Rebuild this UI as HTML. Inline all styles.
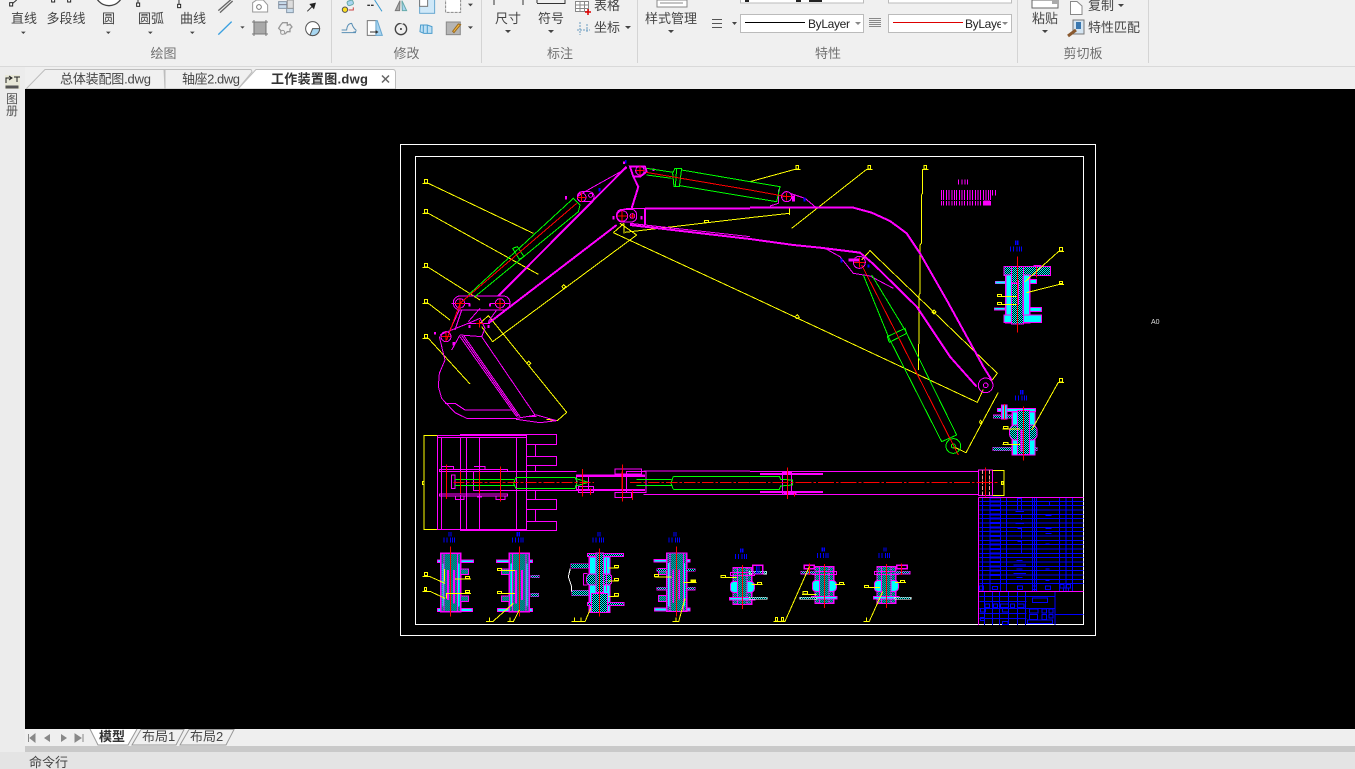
<!DOCTYPE html>
<html lang="zh"><head><meta charset="utf-8"><title>工作装置图.dwg</title>
<style>
html,body{margin:0;padding:0;width:1355px;height:769px;overflow:hidden;background:#f0f0f0}
svg{display:block;position:absolute;left:0;top:0}
text{font-family:"Liberation Sans","Noto Sans CJK SC",sans-serif;font-size:13px;fill:#454545}
.m{text-anchor:middle}
.g{fill:#707070}
.dw{shape-rendering:crispEdges;fill:none;stroke-width:3}
.dw .y{stroke:#ff0}.dw .p{stroke:#f0f}.dw .r{stroke:#f00}.dw .l{stroke:#0f0}.dw .b{stroke:#00f}.dw .w{stroke:#fff}
.p2{stroke:#f0f;stroke-width:6}
.yb{fill:none;stroke:#ff0;stroke-width:3}
</style></head><body>
<svg width="1355" height="769" viewBox="0 0 1355 769" xmlns="http://www.w3.org/2000/svg">
<defs>
<pattern id="h" patternUnits="userSpaceOnUse" width="6" height="6"><rect width="6" height="6" fill="#000"/><rect width="3" height="3" fill="#0ff"/><rect x="3" y="3" width="3" height="3" fill="#0ff"/></pattern>
<g id="lab"><rect x="-5" y="-20" width="4" height="13" fill="#00f"/><rect x="1" y="-20" width="4" height="13" fill="#00f"/><path d="M-18 -3V12M-9 -3V12M1 -3V12M8 -3V12M14 -3V12" stroke="#00f" stroke-width="3"/></g>
<g id="sec">
<rect x="-40" y="20" width="108" height="7" fill="#0ff" stroke="#f0f" stroke-width="3"/>
<rect x="-40" y="165" width="106" height="9" fill="#0ff" stroke="#f0f" stroke-width="3"/>
<rect x="-30" y="0" width="60" height="175" fill="url(#h)" stroke="#f0f" stroke-width="4"/>
<rect x="-25" y="30" width="6" height="130" fill="#0ff"/><rect x="20" y="30" width="6" height="130" fill="#0ff"/>
<rect x="-20" y="0" width="40" height="175" fill="url(#h)" stroke="#f0f" stroke-width="3"/>
<rect x="30" y="47" width="24" height="17" fill="url(#h)" stroke="#f0f" stroke-width="3"/>
<rect x="30" y="128" width="24" height="17" fill="url(#h)" stroke="#f0f" stroke-width="3"/>
<path d="M-8 50V140M10 50V150" stroke="#f0f" stroke-width="5"/>
<path d="M0 -20V190" stroke="#f00" stroke-width="3"/>
</g>
<g id="sm">
<rect x="-28" y="8" width="56" height="110" fill="url(#h)" stroke="#f0f" stroke-width="4"/>
<rect x="-36" y="50" width="72" height="32" fill="#0ff" stroke="#f0f" stroke-width="3" rx="10"/>
<rect x="-14" y="8" width="28" height="110" fill="url(#h)" stroke="#f0f" stroke-width="3"/>
<rect x="-38" y="98" width="76" height="7" fill="#0ff" stroke="#f0f" stroke-width="3"/>
<rect x="-36" y="22" width="72" height="10" fill="none" stroke="#f0f" stroke-width="3"/>
<path d="M0 0V132" stroke="#f00" stroke-width="3"/>
</g>
</defs>

<!-- toolbar -->
<rect width="1355" height="66" fill="#f0f0f0"/>
<rect y="66" width="1355" height="1" fill="#d9d9d9"/>
<rect y="67" width="1355" height="22" fill="#efefef"/>
<path d="M331.500 0V63M481.500 0V63M637.500 0V63M1017.500 0V63M1148.500 0V63" stroke="#d4d4d4" fill="none"/>

<g transform="scale(.3333)" fill="none" stroke-width="3">
<path d="M50 0L38 10" stroke="#333"/><rect x="29" y="8" width="9" height="10" fill="#fff" stroke="#222"/>
<rect x="155" y="-3" width="9" height="9" fill="#fff" stroke="#222"/><rect x="203" y="-3" width="9" height="9" fill="#fff" stroke="#222"/>
<circle cx="327" cy="-25" r="42" fill="#fff" stroke="#444" stroke-width="4"/>
<rect x="410" y="9" width="9" height="10" fill="#fff" stroke="#222"/><path d="M414 0V9" stroke="#333"/>
<rect x="533" y="13" width="9" height="10" fill="#fff" stroke="#222"/><path d="M537 0V13" stroke="#333"/>
<path d="M655 32L695 -3M660 38L698 3" stroke="#666" stroke-width="4"/>
<path d="M655 104L695 65" stroke="#3aa0e0" stroke-width="4"/>
<path d="M721 79h13l-6.500 7z" fill="#444" stroke="none"/>
<path d="M758 36V8L770 0H790L803 15V36Z" fill="#fff" stroke="#999"/><circle cx="777" cy="21" r="7" stroke="#777" fill="#fff"/>
<path d="M836 5H860V25H880V38H860V25H836Z" fill="#c9dcec" stroke="#8899aa"/><path d="M836 14H880" stroke="#778"/><rect x="862" y="0" width="18" height="25" fill="#ddd" stroke="#999"/>
<path d="M922 34L938 18" stroke="#333" stroke-width="3"/><path d="M928 12L948 8L942 28Z" fill="#222" stroke="none"/>
<rect x="762" y="66" width="36" height="36" fill="#a9a9a9" stroke="#777"/><path d="M756 66H804M756 102H804M762 60V108M798 60V108" stroke="#777"/>
<path d="M848 68h14v8l8-3 6 8-6 6v8h-8l-6 6h-12l-2-10-6-6 6-10z" fill="#f0f0f0" stroke="#999" stroke-width="4"/><circle cx="848" cy="97" r="6" stroke="#999" fill="#f0f0f0"/>
<circle cx="938" cy="86" r="21" fill="#fff" stroke="#555"/><path d="M938 86H959A21 21 0 0 1 930 105Z" fill="#a7d6f0" stroke="#555"/>
<circle cx="1035" cy="29" r="8" fill="#fde020" stroke="#555"/><rect x="1042" y="2" width="18" height="14" rx="5" fill="#a8d4f0" stroke="#6aa" transform="rotate(-20 1050 9)"/><path d="M1046 30H1060V22" stroke="#c44"/>
<path d="M1102 16H1122" stroke="#333" stroke-width="4" stroke-dasharray="8 3"/><path d="M1124 0L1146 34" stroke="#3a9ad0"/>
<path d="M1200 2L1186 32H1199Z" fill="#aaa" stroke="#777"/><path d="M1206 2L1220 32H1207Z" fill="#a8d4f0" stroke="#6aa"/>
<rect x="1259" y="-5" width="45" height="45" fill="#cfe8f8" stroke="#68a8d0"/><rect x="1259" y="-5" width="24" height="24" fill="#fff" stroke="#777"/>
<rect x="1337" y="-5" width="45" height="42" fill="#fff" stroke="#888" stroke-dasharray="9 3"/>
<path d="M1404 11h15l-7.500 8z" fill="#444" stroke="none"/>
<path d="M1025 98H1068M1025 90H1040Q1042 70 1055 70Q1060 85 1068 90Q1070 97 1060 96" stroke="#5a8fb5"/>
<path d="M1102 62H1128V106H1102Z" fill="#fff" stroke="#777"/><path d="M1128 62H1132L1147 106H1128Z" fill="#a8d4f0" stroke="#68a8d0"/><path d="M1110 96H1130M1127 92L1133 96L1127 100" stroke="#333"/>
<circle cx="1203" cy="87" r="17" stroke="#444" stroke-width="4"/><circle cx="1203" cy="87" r="3" fill="#333" stroke="none"/><path d="M1197 66L1210 70" stroke="#f0f0f0" stroke-width="4"/>
<path d="M1262 75H1282L1296 80V100H1272L1260 95Z" fill="#bfe0f5" stroke="#4a9ccc"/><path d="M1270 75V98M1282 75V100" stroke="#4a9ccc"/>
<rect x="1339" y="66" width="42" height="38" fill="#b5b5b5" stroke="#888"/><path d="M1362 98L1382 74L1375 72L1358 94Z" fill="#f4b942" stroke="#9a6a20"/>
<path d="M1404 79h15l-7.500 8z" fill="#444" stroke="none"/>
<path d="M63 95h14l-7 7zM318 95h14l-7 7zM444 95h14l-7 7zM570 95h14l-7 7z" fill="#444" stroke="none"/>
</g>

<text x="24" y="23" class="m">直线</text><text x="66" y="23" class="m">多段线</text><text x="108.500" y="23" class="m">圆</text><text x="151" y="23" class="m">圆弧</text><text x="193" y="23" class="m">曲线</text>
<text x="508" y="23" class="m">尺寸</text><text x="551" y="23" class="m">符号</text><text x="671" y="23" class="m">样式管理</text>
<text x="594" y="10">表格</text><text x="594" y="32">坐标</text>
<text x="1045" y="23" class="m">粘贴</text><text x="1088" y="10">复制</text><text x="1088" y="32">特性匹配</text>
<text x="163.500" y="58" class="m g">绘图</text><text x="406.500" y="58" class="m g">修改</text><text x="560" y="58" class="m g">标注</text><text x="828" y="58" class="m g">特性</text><text x="1083" y="58" class="m g">剪切板</text>

<path d="M494 0V5M523 0V5" stroke="#333"/><path d="M537 3.500H565V0" stroke="#333" fill="none"/><path d="M537 0V3" stroke="#333"/>
<path d="M505 30h6l-3 3zM548 30h6l-3 3zM668 30h6l-3 3zM1042 30h6l-3 3zM625 26h6l-3 3zM1118 4h6l-3 3z" fill="#444"/>
<g fill="none" stroke="#888"><rect x="575.500" y="1.500" width="13" height="10" fill="#fff"/><path d="M575 5H589M575 8.500H589M580 1V12M584.500 1V12"/></g>
<path d="M588 9V15M585 12H591" stroke="#d00" stroke-width="1.500"/>
<g stroke="#6a9cc0" fill="none" stroke-dasharray="2 1"><path d="M577 30H590M580 22V35M587 24V33"/></g>
<rect x="657" y="0" width="30" height="7" fill="#fff" stroke="#888"/><path d="M660 3H683" stroke="#888"/>
<g fill="none"><path d="M712 19.500H722M712 23.500H722M712 27.500H722" stroke="#555"/><path d="M732 22h5l-2.500 3z" fill="#444"/></g>
<path d="M869 18.500H881M869 20.500H881M869 22.500H881M869 24.500H881M869 26.500H881" stroke="#888"/>
<rect x="740.500" y="14.500" width="123" height="18" fill="#fff" stroke="#bbb"/><rect x="888.500" y="14.500" width="123" height="18" fill="#fff" stroke="#bbb"/>
<rect x="740.500" y="-5" width="123" height="8" fill="#fff" stroke="#bbb"/><rect x="888.500" y="-5" width="123" height="8" fill="#fff" stroke="#bbb"/>
<rect x="745" y="0" width="4" height="2" fill="#222"/><rect x="796" y="0" width="5" height="2" fill="#222"/><rect x="809" y="0" width="13" height="2" fill="#222"/>
<rect x="745" y="22" width="60" height="1" fill="#000"/><rect x="893" y="22" width="70" height="1" fill="#d00"/>
<text x="808" y="28" style="font-size:12px;fill:#222" textLength="42">ByLayer</text>
<svg x="965" y="14" width="36" height="19" viewBox="0 0 36 19"><text x="0" y="14" style="font-size:12px;fill:#222" textLength="42">ByLayer</text></svg>
<path d="M855 22h6l-3 3zM1002 22h6l-3 3z" fill="#888"/>
<rect x="1032" y="0" width="26" height="8" fill="#fff" stroke="#666"/><rect x="1052" y="0" width="6" height="4" fill="#aaa"/>
<path d="M1070.500 1.500H1077L1082 6V14.500H1070.500Z" fill="#fff" stroke="#888"/>
<rect x="1073" y="20" width="11" height="14" fill="#d5e5f2" stroke="#777"/><rect x="1076" y="22" width="5" height="7" fill="#3a78b0"/><path d="M1068 36L1076 30" stroke="#8a5a30" stroke-width="3"/>

<!-- tabs -->
<path d="M26 89L45 69.500H164L165 89Z" fill="#f0f0f0" stroke="#bdbdbd"/>
<path d="M165 89V69.500H251L252 72L238 89Z" fill="#f0f0f0" stroke="#bdbdbd"/>
<path d="M238 89L256 69.500H393Q395 69.500 395.500 72V89Z" fill="#fff" stroke="#bdbdbd"/>
<text x="60" y="83.500" textLength="91">总体装配图.dwg</text><text x="182" y="83.500" textLength="58">轴座2.dwg</text>
<text x="271" y="83.500" style="font-weight:bold;fill:#333" textLength="97">工作装置图.dwg</text>
<path d="M382 75.500L389 82.500M389 75.500L382 82.500" stroke="#666" stroke-width="1.500"/>

<!-- left -->
<rect x="0" y="67" width="25" height="702" fill="#ececec"/>
<rect x="5" y="75" width="15" height="14" fill="#e8e8d8"/>
<path d="M6 83V78H11M9 76L12 78L9 80M14 77H20M17 77V82" stroke="#222" fill="none"/><rect x="5.500" y="85.500" width="13" height="3" fill="#555"/>
<text x="6" y="103" style="font-size:12px;fill:#555">图</text>
<text x="6" y="115" style="font-size:12px;fill:#555">册</text>

<!-- canvas -->
<rect x="25" y="89" width="1330" height="640" fill="#000"/>
<rect x="400.500" y="144.500" width="695" height="491" fill="none" stroke="#fff"/>
<rect x="415.500" y="156.500" width="668" height="468" fill="none" stroke="#fff"/>
<text x="1151" y="324" style="font-size:7px;fill:#ddd">A0</text>

<!-- region Z3 -->
<g class="dw" transform="translate(400 140) scale(.33333)">
<g class="y">
<rect x="73" y="119" width="10" height="10"/><path d="M67 130H85L400 280"/>
<rect x="73" y="209" width="10" height="10"/><path d="M67 220H85L415 403"/>
<rect x="73" y="371" width="10" height="10"/><path d="M67 382H85L240 480"/>
<rect x="73" y="479" width="10" height="10"/><path d="M67 490H85L150 540"/>
<rect x="73" y="584" width="10" height="10"/><path d="M67 595H85L210 732"/>
<path d="M640 278L1050 468"/>
<path d="M245 560L278 605L710 285L660 250M640 278L672 250M672 250V280M675 277L1050 233"/>
<path d="M240 550L265 527L500 817L472 842L440 838"/>
<rect x="914" y="241" width="11" height="7"/>
<path d="M486 440L491 434L497 440L491 446Z"/><path d="M381 670L386 664L392 670L386 676Z"/>
</g>
<g class="p">
<path class="p2" d="M680 80L295 468"/>
<path d="M680 85L590 135L555 155M555 155L532 170"/>
<path class="p2" d="M265 550L650 255"/>
<path d="M118 590L130 640L135 660L118 700L115 740L125 775L165 818L200 835L350 835"/>
<path d="M135 790H165L195 810H335"/>
<path d="M180 590L350 830M186 588L355 830M192 588L360 830"/>
<path d="M245 590L405 825"/>
<path d="M180 585L155 630M180 585L245 590L255 565L240 535L205 550L150 572L120 585"/>
<path d="M350 835L410 825L470 842L420 848L350 838ZM380 830H410"/>
<rect x="160" y="468" width="170" height="42" rx="20"/>
<path d="M178 510L150 570M185 510L165 570M240 505L205 545M290 510L265 545"/>
<circle cx="180" cy="490" r="14"/><circle cx="300" cy="490" r="14"/>
<circle cx="138" cy="590" r="15"/>
<path d="M155 490H210M270 490H330M205 550H270"/>
<circle cx="545" cy="172" r="13"/><rect x="532" y="155" width="50" height="30" rx="14"/><circle cx="572" cy="166" r="6"/>
<path class="p2" d="M690 80H735L740 95L720 110L700 110ZM700 110L715 140L695 205"/>
<circle cx="720" cy="92" r="13"/>
<path d="M650 230Q650 205 695 205H735"/>
<path class="p2" d="M735 205H1050"/>
<path class="p2" d="M735 205V255"/>
<rect x="650" y="208" width="60" height="38" rx="16"/>
<circle cx="697" cy="228" r="7"/>
<circle cx="667" cy="228" r="16"/>
<path class="p2" d="M690 255L1050 297"/>
<path d="M690 250L1050 290"/>
</g>
<g style="stroke:none"><rect x="637" y="228" width="6" height="10" fill="#f0f"/><rect x="722" y="228" width="6" height="10" fill="#f0f"/><rect x="495" y="168" width="6" height="10" fill="#f0f"/><rect x="669" y="64" width="6" height="8" fill="#f0f"/><rect x="757" y="85" width="6" height="8" fill="#f0f"/><rect x="205" y="490" width="7" height="9" fill="#f0f"/><rect x="102" y="576" width="6" height="8" fill="#f0f"/><rect x="158" y="606" width="7" height="10" fill="#f0f"/><rect x="205" y="555" width="6" height="9" fill="#f0f"/><rect x="263" y="555" width="6" height="9" fill="#f0f"/><rect x="267" y="490" width="6" height="9" fill="#f0f"/></g>
<g style="stroke:none"><rect x="595" y="144" width="6" height="10" fill="#00f"/><rect x="675" y="60" width="5" height="10" fill="#00f"/></g>
<g class="l">
<path d="M205 465L520 175L540 195L535 215L225 470"/>
<path d="M338 325L352 320L372 350L358 358Z"/>
<path d="M740 85L820 97M740 105L815 115M845 90L1050 125M840 137L1050 172"/>
<path d="M818 100L825 85H845L838 140H822Z"/><path d="M830 85L826 140"/>
</g>
<g class="r">
<path d="M140 600L180 490L530 190"/>
<path d="M738 97L1050 150"/>
<path d="M180 475V510M165 490H195M300 475V510M285 490H315M138 575V605M125 590H152M545 158V186M532 172H558M720 78V106M708 92H734M666 212V244M652 228H682M697 220V236M690 228H705M238 540V562M228 550H250"/>
</g>
</g>

<!-- region Z4 -->
<g class="dw" transform="translate(750 140) scale(.33333)">
<g class="y">
<rect x="138" y="77" width="8" height="10"/><path d="M152 88H135L0 125"/>
<rect x="354" y="77" width="8" height="10"/><path d="M368 88H350L125 265"/>
<rect x="522" y="77" width="8" height="10"/><path d="M536 88H518V160L514 165V310L510 315V460L507 465V610L505 615V690"/>
<path d="M335 360L360 332L742 700L725 722"/>
<path d="M0 468L682 787L700 748"/>
<path d="M745 757L648 938L610 920"/>
<path d="M118 205V225M0 233L118 220"/>
<path d="M546 516L552 510L558 516L552 522Z"/><path d="M688 846L692 841L696 846L692 851Z"/><path d="M135 530L142 524L148 532L140 536Z"/>
</g>
<g class="p">
<path class="p2" d="M0 203H310"/>
<path class="p2" d="M310 203L365 218L420 243L470 280L510 340L590 480L700 680L725 720"/>
<path class="p2" d="M0 297L130 315L210 323L330 338L370 372L500 500L600 650L680 740"/>
<path d="M90 150H85V190L60 198M120 160L165 175L195 200"/>
<circle cx="707" cy="736" r="22"/><circle cx="707" cy="736" r="7"/>
<path d="M225 325L270 350L310 400L360 408L430 445"/>
<circle cx="110" cy="170" r="15"/><circle cx="328" cy="367" r="18"/>
<path d="M130 166V184M295 360H330" stroke="#f0f" stroke-width="9"/>
</g>
<g class="l">
<path d="M0 125L90 140L80 185L0 172"/>
<path d="M365 405L465 570L620 885M340 405L415 590L575 905"/>
<path d="M412 590L465 565L470 580L418 607Z"/><path d="M575 905L620 885"/>
<circle cx="610" cy="918" r="22"/><circle cx="610" cy="918" r="6"/>
</g>
<g class="r"><path d="M0 150L110 170M335 375L625 945M98 170H125M110 158V182M312 367H345M328 352V382"/></g>
<g style="stroke:none"><rect x="160" y="172" width="6" height="12" fill="#00f"/><rect x="272" y="355" width="6" height="12" fill="#00f"/><rect x="353" y="373" width="6" height="10" fill="#00f"/></g>
<path class="p" d="M626 118V134M636 118V134M645 118V134M653 118V134"/>
<path class="p" style="stroke-dasharray:30 3" d="M575 150V197M581 150V197M590 150V197M597 150V197M606 150V197M613 150V197M620 150V197M628 150V197M636 150V197M644 150V197M652 150V197M660 150V197M668 150V197M676 150V197M684 150V197M692 150V197M700 150V197M708 150V197M716 150V197M722 150V197M728 150V167M736 150V167"/>
<rect x="700" y="182" width="20" height="15" fill="#f0f"/>
<!-- section 1 -->
<use href="#lab" x="800" y="322"/>
<rect x="762" y="380" width="140" height="26" fill="url(#h)" stroke="#f0f" stroke-width="3"/>
<rect x="736" y="424" width="30" height="7" fill="#0ff" stroke="#f0f" stroke-width="2"/><rect x="733" y="503" width="32" height="7" fill="#0ff" stroke="#f0f" stroke-width="2"/>
<rect x="838" y="418" width="22" height="12" fill="#0ff" stroke="#f0f"/><rect x="838" y="503" width="36" height="12" fill="#0ff" stroke="#f0f"/>
<rect x="767" y="405" width="72" height="143" fill="#0ff" stroke="#f0f" stroke-width="4"/>
<rect x="762" y="525" width="112" height="22" fill="#0ff" stroke="#f0f" stroke-width="3"/>
<rect x="785" y="380" width="36" height="172" fill="url(#h)" stroke="#f0f" stroke-width="3"/>
<path d="M785 430H805M805 420V495M820 410V525M850 378H872V385" stroke="#f0f" stroke-width="5"/>
<path class="r" d="M802 350V578M860 380V412"/>
<g class="y"><rect x="928" y="323" width="10" height="10"/><path d="M942 335H925L825 425"/><rect x="928" y="424" width="10" height="7"/><path d="M942 434H925L830 458"/><rect x="742" y="463" width="12" height="6"/><path d="M742 470H800"/><rect x="742" y="487" width="12" height="6"/><path d="M742 494H800"/></g>
<!-- section 2 -->
<use href="#lab" x="815" y="770"/>
<rect x="743" y="805" width="114" height="10" fill="#0ff" stroke="#f0f" stroke-width="3"/>
<rect x="730" y="825" width="60" height="10" fill="url(#h)" stroke="#f0f" stroke-width="2"/>
<rect x="728" y="922" width="134" height="10" fill="url(#h)" stroke="#f0f" stroke-width="2"/>
<rect x="787" y="815" width="68" height="130" fill="#0ff" stroke="#f0f" stroke-width="4"/>
<rect x="779" y="855" width="82" height="45" rx="16" fill="url(#h)" stroke="#f0f" stroke-width="3"/>
<rect x="803" y="812" width="36" height="132" fill="url(#h)" stroke="#f0f" stroke-width="3"/>
<rect x="755" y="795" width="16" height="42" fill="#0ff" stroke="#f0f" stroke-width="4"/>
<path d="M815 868V935" stroke="#f0f" stroke-width="6"/>
<path class="r" d="M820 800V962M763 792V840"/>
<g class="y"><rect x="928" y="716" width="10" height="10"/><path d="M942 727H925L845 870"/><rect x="760" y="859" width="14" height="6"/><path d="M758 867H810"/><rect x="760" y="907" width="14" height="6"/><path d="M758 914H810"/></g>
</g>

<!-- region Z5 -->
<g class="dw" transform="translate(400 425) scale(.33333)">
<path class="y" d="M70 31H112M72 31V313M70 313H112"/><rect class="y" x="67" y="169" width="5" height="9"/>
<g class="p">
<path d="M112 31V313H380M112 31H380M112 38H380M180 28H380M125 38V313M181 38V140M181 210V313M199 38V313M238 38V313M349 38V313M379 38V318"/>
<path class="p2" d="M180 315H380"/>
<rect x="380" y="28" width="90" height="31"/><rect x="380" y="94" width="90" height="28"/><rect x="380" y="223" width="90" height="31"/><rect x="380" y="289" width="90" height="28"/>
<path d="M406 59V94M406 122V140M406 197V223M406 254V289"/>
<rect x="118" y="133" width="205" height="7"/><rect x="118" y="207" width="205" height="6"/>
<path d="M220 140V197H530M220 140H530M125 125H160V133M222 125H255V133M167 213V223H192V213M232 213V216H245V213M288 213V223H315V213M125 140V207M155 150H165V190H155Z"/>
<path d="M530 152H735M530 195H735" stroke="#f0f" stroke-width="7"/>
<rect x="530" y="150" width="35" height="45"/>
<rect x="535" y="185" width="45" height="17"/><rect x="645" y="132" width="80" height="15"/><rect x="645" y="202" width="50" height="15"/>
<rect x="680" y="140" width="58" height="62"/>
<path d="M730 138H1050M730 208H1050"/>
</g>
<g class="l">
<path d="M165 163H342M165 181H342"/>
<path d="M348 157H525L532 170L525 191H348L341 175Z"/>
<path d="M525 160L565 172L525 184"/>
<path d="M710 163H815M710 181H815M820 154H1050M820 193H1050M820 154L813 175L820 193"/>
</g>
<g class="r">
<path d="M160 172H582M690 172H1050" style="stroke-dasharray:34 6 8 6"/>
<path d="M139 118V222M301 125V230M548 132V215M667 118V230M572 190V210M697 195V225M181 140V205M238 140V205"/>
<path d="M667 140V192" style="stroke-width:5"/>
</g>
<use href="#lab" x="150" y="341"/><use href="#lab" x="355" y="341"/><use href="#lab" x="597" y="341"/><use href="#lab" x="825" y="341"/><use href="#lab" x="1025" y="390"/>
<use href="#sec" transform="translate(152 385)"/>
<use href="#sec" transform="translate(358 385) scale(-1 1)"/>
<use href="#sec" transform="translate(830 384) scale(-1 1)"/>
<rect x="770" y="431" width="30" height="8" fill="url(#h)" stroke="#f0f" stroke-width="2"/><rect x="770" y="487" width="30" height="8" fill="url(#h)" stroke="#f0f" stroke-width="2"/><rect x="860" y="431" width="26" height="8" fill="url(#h)" stroke="#f0f" stroke-width="2"/><rect x="860" y="487" width="26" height="8" fill="url(#h)" stroke="#f0f" stroke-width="2"/>
<rect x="392" y="451" width="26" height="7" fill="url(#h)" stroke="#f0f" stroke-width="2"/><rect x="392" y="505" width="24" height="10" fill="url(#h)" stroke="#f0f" stroke-width="2"/>
<rect x="562" y="385" width="108" height="10" fill="url(#h)" stroke="#f0f" stroke-width="3"/>
<rect x="512" y="416" width="60" height="14" fill="url(#h)" stroke="#f0f" stroke-width="2"/>
<rect x="515" y="496" width="58" height="16" fill="url(#h)" stroke="#f0f" stroke-width="2"/>
<rect x="568" y="395" width="62" height="167" fill="#0ff" stroke="#f0f" stroke-width="4"/>
<rect x="562" y="532" width="110" height="10" fill="url(#h)" stroke="#f0f" stroke-width="3"/>
<rect x="575" y="505" width="48" height="57" fill="url(#h)" stroke="#f0f" stroke-width="3"/>
<rect x="560" y="447" width="75" height="33" rx="10" fill="url(#h)" stroke="#f0f" stroke-width="3"/>
<rect x="588" y="384" width="22" height="118" fill="url(#h)" stroke="#f0f" stroke-width="3"/>
<path class="p" d="M550 445H562M550 445V480H562M610 400V500M620 400V500"/>
<path class="w" d="M511 430L505 455L515 485V500"/>
<path class="r" d="M598 370V575"/>
<use href="#sm" transform="translate(1027 420)"/>
<g class="y">
<rect x="73" y="442" width="10" height="10"/><path d="M67 454H88L135 475"/>
<rect x="73" y="487" width="6" height="10"/><path d="M67 499H90L135 520"/>
<rect x="196" y="454" width="13" height="6"/><path d="M213 462H165M133 432V470"/>
<rect x="196" y="496" width="13" height="7"/><path d="M213 505H140V520"/>
<rect x="292" y="430" width="13" height="7"/><path d="M292 437H345"/>
<rect x="292" y="499" width="13" height="7"/><path d="M292 506H345"/>
<path d="M258 590H278L340 535M268 578V590M322 590H340L358 555M330 578V590"/>
<path d="M515 590H555L572 550M523 577V590M543 577V590"/>
<rect x="643" y="421" width="13" height="7"/><path d="M656 429H625"/>
<rect x="643" y="460" width="13" height="7"/><path d="M656 468H625"/>
<rect x="643" y="505" width="13" height="8"/><path d="M656 515H625"/>
<rect x="763" y="448" width="13" height="7"/><path d="M763 456H815"/>
<rect x="873" y="465" width="14" height="7" fill="#ff0"/><path d="M890 473H850"/>
<path d="M817 590H836L855 520M828 577V590"/>
<rect x="963" y="451" width="13" height="6"/><path d="M962 458H1010"/>
</g>
</g>

<!-- region Z6 -->
<g class="dw" transform="translate(750 460) scale(.33333)">
<g class="p">
<path d="M0 34H685M0 103H685"/>
<path d="M30 42H219M30 96H219" stroke="#f0f" stroke-width="6"/>
<rect x="97" y="38" width="28" height="66"/>
<path d="M100 38H120M100 102H140" stroke="#f0f" stroke-width="7"/>
<rect x="685" y="30" width="43" height="77"/>
</g>
<path d="M697 30V107M718 30V107" stroke="#f99" style="stroke-dasharray:12 4"/>
<path class="l" d="M0 49H88L92 58L128 60V75L92 78L88 88H0"/>
<path class="r" d="M0 67H745" style="stroke-dasharray:48 6 8 6"/>
<path class="r" d="M112 22V117M706 22V110M133 100V110"/>
<path class="y" d="M728 31H762V107H728"/><rect class="y" x="754" y="64" width="5" height="9"/>
<use href="#sm" transform="translate(223 312)"/>
<use href="#sm" transform="translate(409 312)"/>
<use href="#lab" x="220" y="282"/><use href="#lab" x="405" y="282"/>
<rect x="150" y="412" width="50" height="6" fill="url(#h)" stroke="#fff" stroke-width="2"/>
<rect x="435" y="412" width="48" height="6" fill="url(#h)" stroke="#fff" stroke-width="2"/>
<rect x="152" y="334" width="45" height="8" fill="url(#h)" stroke="#f0f" stroke-width="2"/>
<rect x="435" y="334" width="45" height="8" fill="url(#h)" stroke="#f0f" stroke-width="2"/>
<rect x="163" y="316" width="30" height="10" fill="none" stroke="#f0f" stroke-width="4"/><rect x="440" y="316" width="32" height="10" fill="none" stroke="#f0f" stroke-width="4"/>
<path class="r" d="M178 310V345M454 310V345"/>
<rect x="-2" y="412" width="54" height="6" fill="url(#h)" stroke="#fff" stroke-width="2"/>
<rect x="-2" y="334" width="52" height="8" fill="url(#h)" stroke="#fff" stroke-width="2"/>
<rect x="8" y="316" width="30" height="26" fill="none" stroke="#f0f" stroke-width="4"/>
<path d="M20 318V340M27 318V340" stroke="#00f" stroke-width="4"/>
<g class="y">
<rect x="76" y="472" width="7" height="11"/><rect x="95" y="472" width="6" height="11"/><path d="M70 484H105L178 320"/>
<rect x="159" y="394" width="13" height="8"/><path d="M156 403H200"/>
<rect x="268" y="367" width="13" height="6"/><path d="M285 373H255"/>
<rect x="22" y="367" width="13" height="6"/><path d="M38 373H5"/>
<path d="M340 484H358L398 395M350 472V484"/>
<rect x="343" y="376" width="13" height="6"/><path d="M342 382H390"/>
<rect x="451" y="361" width="13" height="6"/><path d="M468 367H435"/>
</g>
<g class="b">
<path d="M688 124H1000M688 137H1000M688 150H1000M688 163H1000M688 176H1000M688 189H1000M688 202H1000M688 215H1000M688 228H1000M688 241H1000M688 254H1000M688 267H1000M688 280H1000M688 293H1000M688 306H1000M688 319H1000M688 332H1000M688 345H1000M688 358H1000M688 371H1000"/>
<path d="M697 112V394M720 112V394M752 112V394M770 112V394M848 112V394M853 112V394M860 112V394M928 112V394M948 112V394M968 112V394"/>
<path d="M719 112H751M719 125H751M719 137H751M719 150H751M719 163H751M719 176H751M719 189H751M719 202H751M719 215H751M719 228H751M719 241H751M719 254H751M719 267H751M719 280H751M719 293H751M719 306H751M719 319H751M719 332H751M719 345H751" style="stroke-width:6"/>
<path d="M802 115H815V150H802ZM796 155H822M802 163H815V180M796 190H822M802 205H815V235M802 245H815V280M800 302H818M790 315H828M800 327H818M790 340H828M800 352H818M887 125H899V135M887 166H905M887 205H905M887 220H905M887 242H905M887 252H899M887 327H899M887 362H899"/>
<rect x="688" y="378" width="12" height="12"/><rect x="727" y="380" width="16" height="9"/><rect x="802" y="378" width="16" height="11"/><rect x="848" y="378" width="12" height="11"/><rect x="886" y="378" width="16" height="11"/><rect x="930" y="373" width="12" height="11"/><rect x="950" y="373" width="12" height="11"/><rect x="940" y="384" width="16" height="10"/>
<path d="M688 409H915M688 424H830M688 445H915M688 460H830M688 476H830M915 463H1000"/>
<path d="M703 394V495M727 394V495M748 394V495M776 394V495M803 394V495M827 394V495M915 394V495"/>
<rect x="705" y="432" width="14" height="11"/><rect x="730" y="432" width="12" height="11"/><rect x="752" y="432" width="24" height="11"/><rect x="782" y="432" width="12" height="11"/><rect x="802" y="432" width="20" height="11"/><rect x="692" y="446" width="14" height="10"/><rect x="758" y="446" width="18" height="10"/>
<rect x="847" y="414" width="45" height="14"/><rect x="838" y="447" width="26" height="12"/><rect x="876" y="447" width="14" height="12"/><rect x="897" y="447" width="12" height="12"/><rect x="838" y="464" width="24" height="14"/><rect x="876" y="464" width="14" height="14"/><rect x="897" y="464" width="12" height="10"/><rect x="832" y="480" width="76" height="10"/>
<rect x="692" y="472" width="12" height="10"/><rect x="758" y="484" width="16" height="10"/>
</g>
<path class="p" d="M685 112H1000M685 112V495M685 394H1000"/>
</g>

<!-- bottom tabs -->
<rect x="25" y="729" width="1330" height="17" fill="#efefef"/>
<rect x="25" y="746" width="1330" height="6" fill="#c9c9c9"/>
<rect x="0" y="752" width="1355" height="17" fill="#e4e4e4"/>
<path d="M28.500 734V742M30 738L35 734V742Z" fill="#888" stroke="#888"/>
<path d="M50 734V742L44 738Z" fill="#888"/><path d="M61 734V742L67 738Z" fill="#888"/>
<path d="M75 734V742L81 738ZM83 734V742" fill="#888" stroke="#888"/>
<path d="M90 729L98 745H128L137 729" fill="#fff" stroke="#999"/>
<path d="M132 745L141 729.500H184L176 745Z" fill="#f0f0f0" stroke="#999"/>
<path d="M180 745L189 729.500H234L226 745Z" fill="#f0f0f0" stroke="#999"/>
<text x="99" y="741" style="font-weight:bold;fill:#333">模型</text>
<text x="142" y="741">布局1</text><text x="190" y="741">布局2</text>
<text x="29" y="767">命令行</text>
</svg>
</body></html>
